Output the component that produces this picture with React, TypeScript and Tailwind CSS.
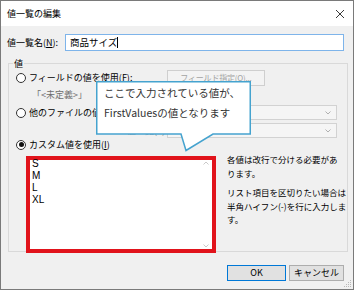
import React from 'react';

const ui = "font-['Noto_Sans_CJK_JP','Noto_Sans',sans-serif]";

function Radio({ checked }: { checked?: boolean }) {
  return (
    <span className="flex h-[10px] w-[10px] shrink-0 items-center justify-center rounded-full border border-[#333333] bg-white">
      {checked && <span className="h-[5px] w-[5px] rounded-full bg-[#111111]" />}
    </span>
  );
}

function Combo() {
  return (
    <div className="flex h-[15px] w-[170px] items-center justify-end border border-[#d2d2d2] bg-[#f5f5f5] pr-[5px]">
      <svg width="6" height="4" viewBox="0 0 6 4">
        <path d="M0.5 0.5 L3 3 L5.5 0.5" fill="none" stroke="#a8a8a8" strokeWidth="0.9" />
      </svg>
    </div>
  );
}

export default function App() {
  return (
    <div className={`relative flex h-[290px] w-[354px] flex-col overflow-hidden border border-[#7a7a7a] bg-[#f0f0f0] text-[9px] text-black ${ui}`}>
      {/* title bar */}
      <div className="flex h-[25px] items-center justify-between bg-white pl-[6px] pr-[8px]">
        <span className="text-[9px]">値一覧の編集</span>
        <svg width="10" height="10" viewBox="0 0 10 10">
          <path d="M1 1 L9 9 M9 1 L1 9" stroke="#222222" strokeWidth="0.9" />
        </svg>
      </div>

      {/* name row */}
      <div className="mt-[8px] flex items-center pl-[6px]">
        <span className="w-[58px] whitespace-nowrap">
          値一覧名(<span className="underline">N</span>):
        </span>
        <div className="flex h-[17px] w-[279px] items-center border border-[#7eb4ea] bg-white pl-[4px] text-[9.5px]">
          <span>商品サイズ</span>
          <span className="h-[11px] w-px bg-black" />
        </div>
      </div>

      {/* group */}
      <fieldset className="relative ml-[7px] mt-[6px] h-[195px] w-[340px] border border-[#d9d9d9]">
        <legend className="ml-[4px] px-[1px] leading-[13px]">値</legend>

        <div className="grid grid-cols-[158px_170px]">
          {/* row A */}
          <div className="flex h-[16px] items-center gap-[3px] pl-[7px]">
            <Radio />
            <span className="whitespace-nowrap">
              フィールドの値を使用(<span className="underline">F</span>):
            </span>
          </div>
          <div className="flex h-[16px] w-[98px] items-center justify-center whitespace-nowrap border border-[#cfcfcf] bg-[#f3f3f3] text-[8px] tracking-[-0.2px] text-[#a3a3a3]">
            フィールド指定(O)...
          </div>

          {/* row B */}
          <div className="mt-[1px] flex h-[16px] items-center pl-[23px] text-[#6d6d6d]">「&lt;未定義&gt;」</div>
          <div className="mt-[1px] h-[16px]" />

          {/* row C */}
          <div className="mt-[2px] flex h-[15px] items-center gap-[3px] pl-[7px]">
            <Radio />
            <span className="whitespace-nowrap">他のファイルの値一</span>
          </div>
          <div className="mt-[2px]">
            <Combo />
          </div>

          {/* row D */}
          <div className="mt-[3px] flex h-[15px] items-center pl-[118px] text-[#8c8c8c]">
            <span className="whitespace-nowrap">値一覧(L):</span>
          </div>
          <div className="mt-[3px]">
            <Combo />
          </div>

          {/* row E */}
          <div className="col-span-2 mt-[1px] flex h-[11px] items-center gap-[3px] pl-[7px]">
            <Radio checked />
            <span className="whitespace-nowrap">
              カスタム値を使用(<span className="underline">I</span>)
            </span>
          </div>
        </div>

        {/* row F */}
        <div className="mt-[6px] flex items-start">
          <div className="ml-[17px] flex h-[97px] w-[190px] border-[4px] border-[#e1131b] bg-white">
            <div className="-mt-[2px] flex-1 pl-[2px] font-['Liberation_Sans',sans-serif] text-[10px] leading-[12px]">
              <div>S</div>
              <div>M</div>
              <div>L</div>
              <div>XL</div>
            </div>
            <div className="flex w-[12px] flex-col items-center justify-between py-[1px]">
              <svg width="6" height="4" viewBox="0 0 6 4">
                <path d="M0.5 3.5 L3 1 L5.5 3.5" fill="none" stroke="#c4c4c4" strokeWidth="0.9" />
              </svg>
              <svg width="6" height="4" viewBox="0 0 6 4">
                <path d="M0.5 0.5 L3 3 L5.5 0.5" fill="none" stroke="#c4c4c4" strokeWidth="0.9" />
              </svg>
            </div>
          </div>
          <div className="-mt-[3px] ml-[11px] whitespace-nowrap text-[8.5px] leading-[13.5px]">
            <div>各値は改行で分ける必要があ</div>
            <div>ります。</div>
            <div className="mt-[6px]">リスト項目を区切りたい場合は</div>
            <div>半角ハイフン(-)を行に入力しま</div>
            <div>す。</div>
          </div>
        </div>
      </fieldset>

      {/* footer */}
      <div className="mt-[13px] flex justify-end gap-[3px] pr-[9px]">
        <div className="flex h-[16px] w-[59px] items-center justify-center border border-[#0078d7] bg-[#e1e1e1]">OK</div>
        <div className="flex h-[16px] w-[55px] items-center justify-center border border-[#adadad] bg-[#e1e1e1]">キャンセル</div>
      </div>

      {/* size grip */}
      <svg className="absolute bottom-[1px] right-[1px]" width="8" height="8" viewBox="0 0 8 8">
        <g fill="#b8b8b8">
          <rect x="6" y="0" width="1" height="1" />
          <rect x="4" y="2" width="1" height="1" />
          <rect x="6" y="2" width="1" height="1" />
          <rect x="2" y="4" width="1" height="1" />
          <rect x="4" y="4" width="1" height="1" />
          <rect x="6" y="4" width="1" height="1" />
          <rect x="0" y="6" width="1" height="1" />
          <rect x="2" y="6" width="1" height="1" />
          <rect x="4" y="6" width="1" height="1" />
          <rect x="6" y="6" width="1" height="1" />
        </g>
      </svg>

      {/* callout annotation */}
      <div className="absolute left-[95px] top-[80px] h-[71px] w-[156px]">
        <svg className="absolute left-0 top-0" width="156" height="71" viewBox="0 0 156 71">
          <path
            d="M0.75 0.75 H154.25 V53 H117 L90 69.5 L85 53 H0.75 Z"
            fill="#ffffff"
            stroke="#45a3cf"
            strokeWidth="1.5"
          />
        </svg>
        <div className="relative whitespace-nowrap pl-[8px] pt-[2px] text-[10.5px] leading-[20px] text-[#333333]">
          <div>ここで入力されている値が、</div>
          <div>FirstValuesの値となります</div>
        </div>
      </div>
    </div>
  );
}
